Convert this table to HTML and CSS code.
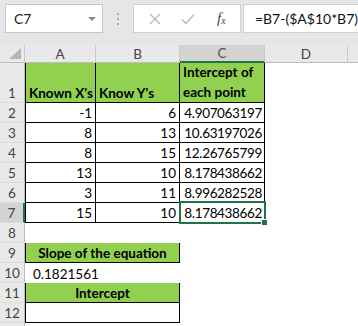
FILE: index.html
```html
<!DOCTYPE html>
<html>
<head>
<meta charset="utf-8">
<link rel="stylesheet" href="styles.css">
</head>
<body>
<div class="app">
  <div class="fbar">
    <div class="namebox">
      <span class="nb-text">C7</span>
      <svg class="nb-arrow" width="8" height="4" viewBox="0 0 8 4"><path d="M0 0 L8 0 L4 4 Z" fill="#8a8a8a"/></svg>
    </div>
    <div class="grip"><i></i><i></i><i></i></div>
    <div class="btns">
      <svg class="ic" width="12" height="12" viewBox="0 0 12 12"><path d="M1 1 L11 11 M11 1 L1 11" stroke="#b8b8b8" stroke-width="1.3" fill="none"/></svg>
      <svg class="ic" width="14" height="12" viewBox="0 0 14 12"><path d="M1 6.5 L5 10.5 L13 1.5" stroke="#b8b8b8" stroke-width="1.3" fill="none"/></svg>
      <span class="fx">f<sub>x</sub></span>
    </div>
    <div class="formula">=B7-($A$10*B7)</div>
  </div>

  <div class="sheet">
    <!-- header row -->
    <div class="corner"><svg width="12" height="11" viewBox="0 0 12 11"><path d="M12 0 L12 11 L0 11 Z" fill="#b5b5b5"/></svg></div>
    <div class="ch">A</div>
    <div class="ch">B</div>
    <div class="ch ch-sel">C</div>
    <div class="ch">D</div>
    <div class="ch ch-last"></div>

    <!-- row 1 -->
    <div class="rh">1</div>
    <div class="c b bl green bold">Known X's</div>
    <div class="c b green bold">Know Y's</div>
    <div class="c b green bold wrap">Intercept of each point</div>
    <div class="c"></div><div class="c"></div>

    <div class="rh">2</div>
    <div class="c b bl r">-1</div><div class="c b r">6</div><div class="c b r num">4.907063197</div>
    <div class="c"></div><div class="c"></div>

    <div class="rh">3</div>
    <div class="c b bl r">8</div><div class="c b r">13</div><div class="c b r num">10.63197026</div>
    <div class="c"></div><div class="c"></div>

    <div class="rh">4</div>
    <div class="c b bl r">8</div><div class="c b r">15</div><div class="c b r num">12.26765799</div>
    <div class="c"></div><div class="c"></div>

    <div class="rh">5</div>
    <div class="c b bl r">13</div><div class="c b r">10</div><div class="c b r num">8.178438662</div>
    <div class="c"></div><div class="c"></div>

    <div class="rh">6</div>
    <div class="c b bl r">3</div><div class="c b r">11</div><div class="c b r num">8.996282528</div>
    <div class="c"></div><div class="c"></div>

    <div class="rh rh-sel">7</div>
    <div class="c b bl r">15</div><div class="c b r">10</div>
    <div class="c b r num active">8.178438662<span class="sel-box"></span><span class="handle"></span></div>
    <div class="c"></div><div class="c"></div>

    <div class="rh">8</div>
    <div class="c span2"></div><div class="c"></div><div class="c"></div><div class="c"></div>

    <div class="rh">9</div>
    <div class="c span2 box green bold ctr">Slope of the equation</div>
    <div class="c"></div><div class="c"></div><div class="c"></div>

    <div class="rh">10</div>
    <div class="c span2 indent">0.1821561</div>
    <div class="c"></div><div class="c"></div><div class="c"></div>

    <div class="rh">11</div>
    <div class="c span2 box green bold ctr">Intercept</div>
    <div class="c"></div><div class="c"></div><div class="c"></div>

    <div class="rh">12</div>
    <div class="c span2 box nobt"></div>
    <div class="c"></div><div class="c"></div><div class="c"></div>

    <div class="rh"></div>
    <div class="c span2"></div><div class="c"></div><div class="c"></div><div class="c"></div>
  </div>
</div>
</body>
</html>
```

FILE: styles.css
```css
* { box-sizing: border-box; }
html, body {
  margin: 0;
  padding: 0;
  background: #ffffff;
}
.app {
  width: 358px;
  height: 326px;
  overflow: hidden;
  font-family: Lato, "Noto Sans", sans-serif;
  font-size: 13.5px;
  color: #000;
}

/* formula bar */
.fbar {
  height: 45px;
  background: #e6e6e6;
  display: flex;
  align-items: flex-start;
  padding-top: 4px;
}
.namebox {
  margin-left: 5px;
  width: 101px;
  height: 29px;
  background: #fff;
  border: 1px solid #c6c6c6;
  display: flex;
  align-items: center;
  justify-content: space-between;
  padding: 0 6px 0 8px;
}
.nb-text {
  font-size: 14px;
  color: #222;
}
.nb-arrow { margin-top: 1px; }
.grip {
  width: 31px;
  height: 29px;
  display: flex;
  flex-direction: column;
  align-items: center;
  justify-content: center;
  gap: 3px;
}
.grip i {
  display: block;
  width: 2px;
  height: 2px;
  background: #a8a8a8;
}
.btns {
  width: 111px;
  height: 29px;
  background: #fff;
  border: 1px solid #d0d0d0;
  display: flex;
  align-items: center;
  padding-left: 15px;
  gap: 20px;
}
.fx {
  font-family: "Liberation Serif", serif;
  font-style: italic;
  font-size: 15px;
  color: #444;
  margin-left: 2px;
}
.fx sub {
  font-size: 10px;
  vertical-align: -1px;
}
.formula {
  margin-left: 2px;
  flex: 1;
  height: 29px;
  background: #fff;
  border: 1px solid #d0d0d0;
  border-right: none;
  display: flex;
  align-items: center;
  padding-left: 11px;
  font-size: 14px;
  color: #111;
  white-space: nowrap;
}

/* sheet grid */
.sheet {
  display: grid;
  grid-template-columns: 25px 71px 84px 85px 83px 1fr;
  grid-template-rows: 18px 40px repeat(11, 20px) 20px;
}
.corner {
  background: #e9e9e9;
  border-right: 1px solid #c9c9c9;
  border-bottom: 1px solid #bdbdbd;
  display: flex;
  align-items: flex-end;
  justify-content: flex-end;
  padding: 0 3px 3px 0;
}
.ch {
  background: #e9e9e9;
  border-right: 1px solid #c9c9c9;
  border-bottom: 1px solid #bdbdbd;
  display: flex;
  align-items: center;
  justify-content: center;
  color: #444;
  font-size: 13.5px;
}
.ch-sel {
  background: #d3d3d3;
  border-bottom: 2px solid #217346;
  color: #555;
}
.ch-last { border-right: none; }
.rh {
  background: #e9e9e9;
  border-right: 1px solid #bdbdbd;
  border-bottom: 1px solid #dcdcdc;
  display: flex;
  align-items: flex-end;
  justify-content: center;
  color: #444;
  font-size: 13.5px;
  line-height: 18px;
}
.rh-sel {
  background: #d3d3d3;
  border-right: 2px solid #217346;
}

.c {
  position: relative;
  display: flex;
  align-items: flex-end;
  padding: 0 3px 0 3px;
  line-height: 17px;
  white-space: nowrap;
}
.b {
  border-right: 1px solid #000;
  border-bottom: 1px solid #000;
}
.bl { border-left: 1px solid #000; }
.r { justify-content: flex-end; }
.num { letter-spacing: -0.35px; padding-right: 2px; }
.green { background: #92d050; }
.bold { font-weight: 700; }
.wrap {
  white-space: normal;
  line-height: 20px;
  padding-bottom: 0;
}
.span2 { grid-column: span 2; }
.box {
  border: 1px solid #000;
  border-top: none;
}
.nobt { border-top: none; }
.ctr { justify-content: center; }
.indent { padding-left: 8px; }

.sel-box {
  position: absolute;
  left: -1px;
  top: -2px;
  right: -2px;
  bottom: -2px;
  border: 2px solid #217346;
  pointer-events: none;
}
.handle {
  position: absolute;
  right: -4px;
  bottom: -4px;
  width: 5px;
  height: 5px;
  background: #217346;
  border: 1px solid #fff;
  box-sizing: content-box;
}
```
